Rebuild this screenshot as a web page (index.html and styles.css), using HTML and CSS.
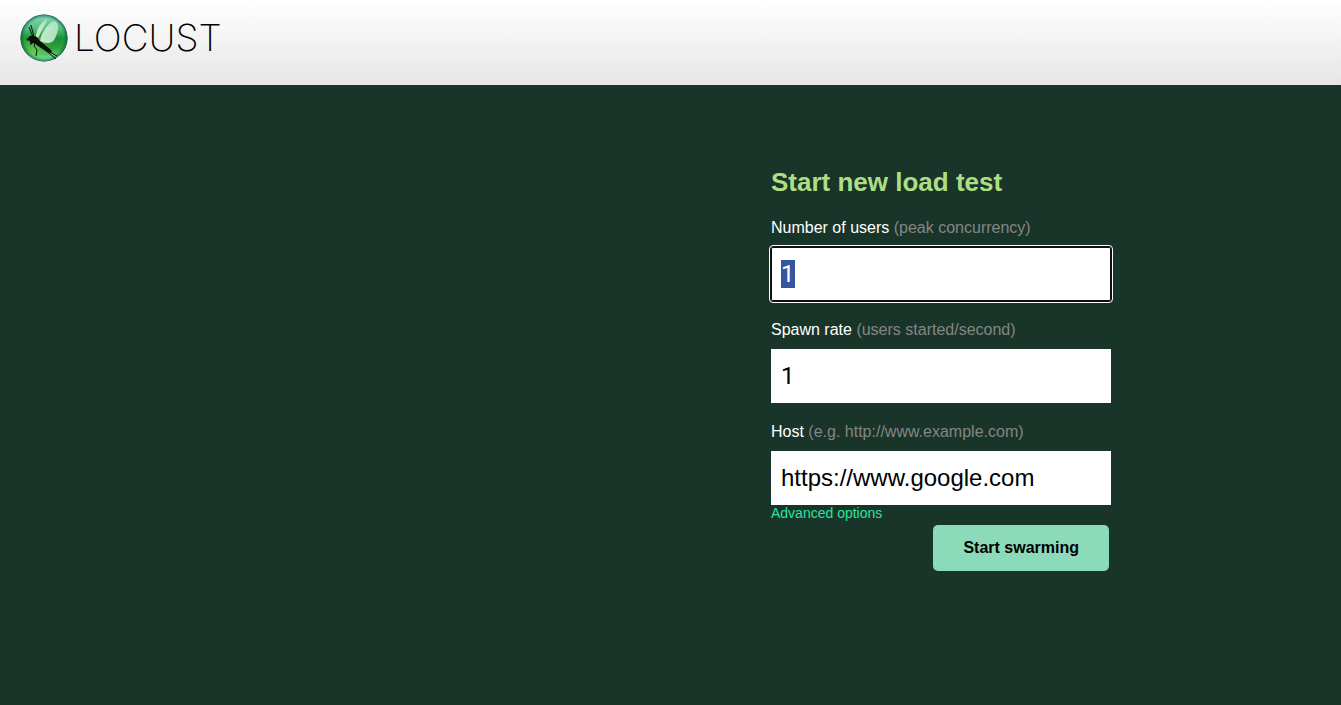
FILE: index.html
```html
<!DOCTYPE html>
<html lang="en">
<head>
<meta charset="utf-8">
<title>Locust</title>
<link rel="stylesheet" href="styles.css">
</head>
<body>
<header class="topbar">
  <a class="brand" href="#">
    <svg class="brand-mark" viewBox="0 0 48 48" aria-hidden="true">
      <defs>
        <linearGradient id="ball" x1="0" y1="0" x2="0" y2="1">
          <stop offset="0" stop-color="#8ad8bd"/>
          <stop offset=".3" stop-color="#58bd7c"/>
          <stop offset=".5" stop-color="#1b8f3a"/>
          <stop offset=".72" stop-color="#2da335"/>
          <stop offset="1" stop-color="#8be6ac"/>
        </linearGradient>
        <radialGradient id="rim" cx=".5" cy=".5" r=".5">
          <stop offset=".84" stop-color="#064b3c" stop-opacity="0"/>
          <stop offset=".95" stop-color="#08644e" stop-opacity=".5"/>
          <stop offset="1" stop-color="#04443a" stop-opacity=".95"/>
        </radialGradient>
        <radialGradient id="glow" cx=".3" cy=".72" r=".35">
          <stop offset="0" stop-color="#7ee05c" stop-opacity=".65"/>
          <stop offset="1" stop-color="#57c64a" stop-opacity="0"/>
        </radialGradient>
        <linearGradient id="wing" x1="1" y1="0" x2="0" y2="1">
          <stop offset="0" stop-color="#aee8c6"/>
          <stop offset="1" stop-color="#e9fae2"/>
        </linearGradient>
      </defs>
      <circle cx="24" cy="24" r="23.5" fill="url(#ball)"/>
      <circle cx="24" cy="24" r="23.5" fill="url(#glow)"/>
      <circle cx="24" cy="24" r="23.5" fill="url(#rim)"/>
      <path d="M16 23C16 16 21 8 27 5c1 2-4 9-9 19z" fill="url(#wing)" opacity=".85"/>
      <path d="M20 27C21 19 28 9 34 7c5 1 5 9 2 15-2 5-4 7-8 7-3 0-6-1-8-2z" fill="url(#wing)" opacity=".85"/>
      <path d="M8 24c1-2 4-3 6-2l3 1 3 4 5 4 6 5 1 2-3 1-5-3-6-4-4-3-3 1-1-3-4-1z" fill="#081309"/>
      <path d="M13 23 9 13M14 23 11 11M10 25l1 6M15 29l-1 3 3 4-1 6M24 35l12 10M28 37l9 5" fill="none" stroke="#081309" stroke-width="1"/>
    </svg>
    <span class="brand-name">LOCUST</span>
  </a>
</header>
<main class="content">
  <form class="start-form">
    <h1 class="title">Start new load test</h1>
    <label class="label" for="users">Number of users <span class="hint">(peak concurrency)</span></label>
    <input class="field number" id="users" type="text" value="1" autocomplete="off">
    <label class="label" for="rate">Spawn rate <span class="hint">(users started/second)</span></label>
    <input class="field number" id="rate" type="text" value="1" autocomplete="off">
    <label class="label" for="host">Host <span class="hint">(e.g. http://www.example.com)</span></label>
    <input class="field" id="host" type="text" value="https://www.google.com" autocomplete="off" spellcheck="false">
    <a class="advanced" href="#">Advanced options</a>
    <button class="submit" type="button">Start swarming</button>
  </form>
</main>
<script src="app.js"></script>
</body>
</html>
```
FILE: styles.css
```css
* {
  box-sizing: border-box;
}

body {
  margin: 0;
  min-height: 100vh;
  background: #19352a;
  color: #fff;
  font: 16px/20px "Liberation Sans", Arial, sans-serif;
}

.topbar {
  height: 85px;
  padding: 14px 20px;
  background: linear-gradient(#fff, #e6e6e6);
}

.brand {
  display: inline-flex;
  align-items: center;
  gap: 6px;
  color: #000;
  text-decoration: none;
}

.brand-mark {
  width: 48px;
  height: 48px;
}

.brand-name {
  font: 200 37px/48px Inter, sans-serif;
}

.content {
  max-width: 881px;
  margin: 0 auto;
  padding: 82px 0 40px;
}

.start-form {
  display: flex;
  flex-direction: column;
  width: 340px;
  margin-left: auto;
}

.title {
  margin: 0 0 2px;
  color: #addf82;
  font-size: 26px;
  line-height: 30px;
}

.label {
  padding: 19px 0 9px;
}

.hint {
  color: #858585;
}

.field {
  width: 100%;
  height: 54px;
  padding: 0 10px;
  border: 0;
  background: #fff;
  color: #000;
  font: 24px "Liberation Sans", Arial, sans-serif;
}

.number {
  font-family: Roboto, Arial, sans-serif;
}

.field:focus {
  border-radius: 2px;
  outline: 1px solid #fff;
  outline-offset: 1px;
  box-shadow: 0 0 0 1px #101010, inset 0 0 0 1px #101010;
}

.field::selection {
  background: #3455a0;
  color: #fff;
}

.advanced {
  align-self: flex-start;
  margin-bottom: 4px;
  color: #29e39d;
  font-size: 14px;
  line-height: 16px;
  text-decoration: none;
}

.submit {
  align-self: flex-end;
  height: 46px;
  margin-right: 2px;
  padding: 0 30px;
  border: 0;
  border-radius: 5px;
  background: #8bdab9;
  color: #000;
  font: bold 16px "Liberation Sans", Arial, sans-serif;
}
```
FILE: app.js
```js
const users = document.getElementById("users");
users.focus();
users.select();
```
